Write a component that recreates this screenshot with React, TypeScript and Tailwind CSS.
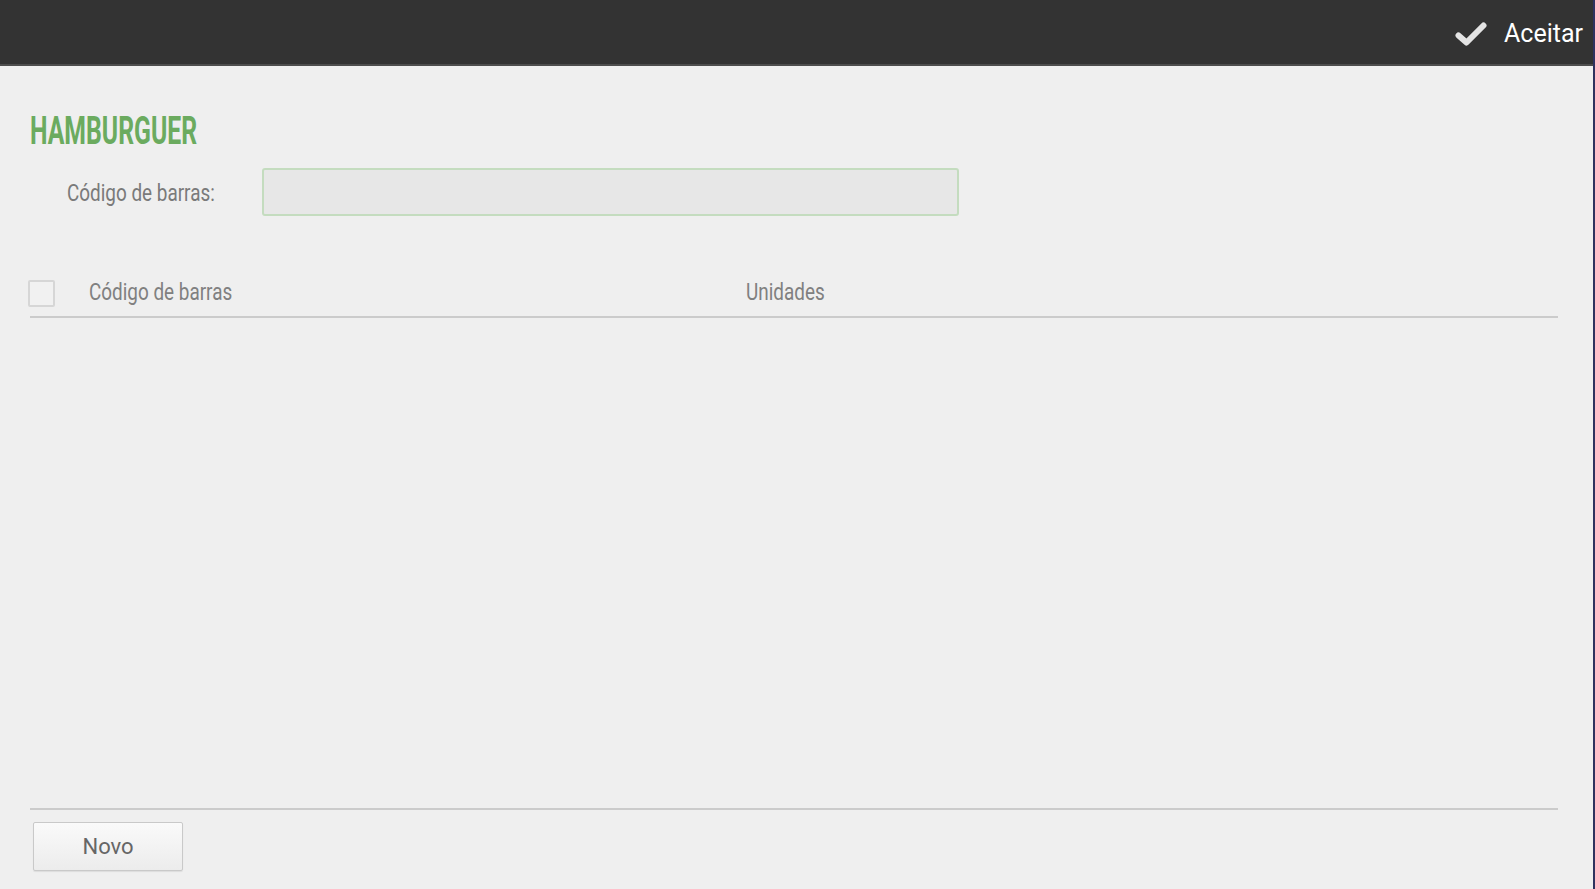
import React from 'react';

// Barcode list editor for a product
const App: React.FC = () => {
    const rows: { code: string; units: number }[] = [];

    return (
        <div className="h-screen w-full flex flex-col bg-[#efefef] border-r-2 border-[#2f325f] font-['Roboto',sans-serif] overflow-hidden">
            {/* Barra superior com botão Aceitar */}
            <header className="h-[66px] shrink-0 bg-[#333333] border-b-2 border-[#4d4d4d] flex items-center justify-end pr-[10px]">
                <button className="mt-[3px] flex items-center gap-[17px] text-white">
                    <svg width="32" height="24" viewBox="0 0 32 24" className="mt-[1px]">
                        <path
                            d="M3.5 13.5 L11.5 20.5 L28.5 3.5"
                            fill="none"
                            stroke="#e4e4e4"
                            strokeWidth="6"
                            strokeLinecap="round"
                            strokeLinejoin="round"
                        />
                    </svg>
                    <span className="text-[25px] leading-none">Aceitar</span>
                </button>
            </header>

            <main className="flex-1 flex flex-col pl-[30px] pr-[35px]">
                {/* Título do produto */}
                <h1 className="mt-[46px] h-[38px] text-[38px] leading-none font-bold text-[#6bab5f] whitespace-nowrap origin-left scale-x-[0.652]">
                    HAMBURGUER
                </h1>

                {/* Campo de código de barras */}
                <div className="mt-[18px] flex items-center pl-[37px]">
                    <label className="w-[195px] shrink-0 text-[23px] leading-none text-[#7a7a7a] whitespace-nowrap origin-left scale-x-[0.822] mt-[3px]">
                        Código de barras:
                    </label>
                    <input
                        type="text"
                        className="w-[697px] h-[48px] bg-[#e7e7e7] border-2 border-[#c4dcbf] rounded-[3px] outline-none px-3"
                    />
                </div>

                {/* Cabeçalho da tabela */}
                <div className="mt-[53px] h-[49px] flex items-center border-b-2 border-[#cbcbcb]">
                    <div className="-ml-[2px] mt-[1px] w-[27px] h-[27px] shrink-0 border-2 border-[#d6d6d6] rounded-[2px] bg-[#f1f1f1]" />
                    <div className="ml-[34px] w-[657px] shrink-0 text-[23px] leading-none text-[#808080] whitespace-nowrap origin-left scale-x-[0.822]">
                        Código de barras
                    </div>
                    <div className="text-[23px] leading-none text-[#808080] whitespace-nowrap origin-left scale-x-[0.822]">
                        Unidades
                    </div>
                </div>

                <div className="flex-1">
                    {rows.map((r) => (
                        <div key={r.code} className="flex h-[48px] items-center">
                            {r.code} {r.units}
                        </div>
                    ))}
                </div>

                {/* Rodapé */}
                <div className="border-t-2 border-[#cbcbcb] pt-[12px] pb-[18px]">
                    <button className="ml-[3px] w-[150px] h-[49px] bg-gradient-to-b from-[#fafafa] to-[#ececec] border border-[#c9c9c9] rounded-[2px] shadow-[0_1px_1px_rgba(0,0,0,0.08)] text-[22px] text-[#666666]">
                        Novo
                    </button>
                </div>
            </main>
        </div>
    );
};

export default App;
